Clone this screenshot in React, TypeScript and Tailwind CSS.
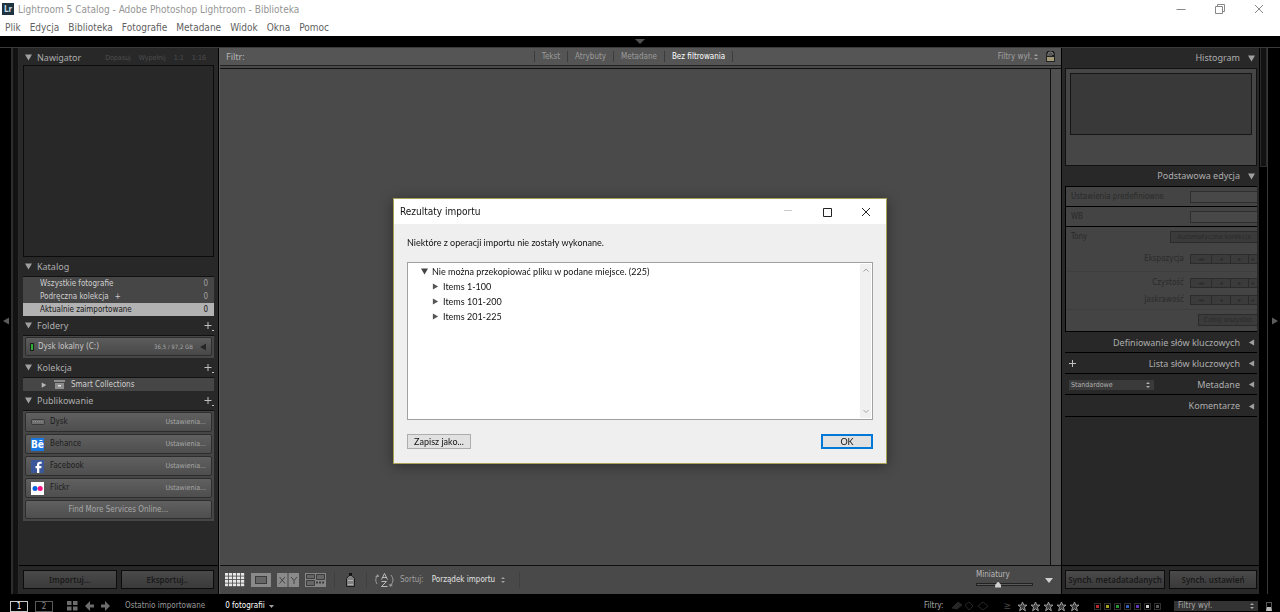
import { clsx } from 'clsx';
import type { ReactNode } from 'react';

const MENU = ['Plik', 'Edycja', 'Biblioteka', 'Fotografie', 'Metadane', 'Widok', 'Okna', 'Pomoc'];
const FILTERS = ['Tekst', 'Atrybuty', 'Metadane', 'Bez filtrowania'];
const CATALOG = [
  { name: 'Wszystkie fotografie', count: 0 },
  { name: 'Podręczna kolekcja', count: 0, plus: true },
  { name: 'Aktualnie zaimportowane', count: 0, active: true },
];
const SERVICES = [
  { name: 'Dysk', icon: <DriveIcon /> },
  { name: 'Behance', icon: <BehanceIcon /> },
  { name: 'Facebook', icon: <FacebookIcon /> },
  { name: 'Flickr', icon: <FlickrIcon /> },
];
const STEPS = [
  { sign: '◂◂', width: 'w-5' },
  { sign: '◂', width: 'w-[19px]' },
  { sign: '▸', width: 'w-[18px]' },
  { sign: '▸', width: 'flex-1' },
];
const ITEMS = ['Items 1-100', 'Items 101-200', 'Items 201-225'];
const LABELS = [
  { name: 'Czerwona', color: 'bg-[#b82a2a]' },
  { name: 'Żółta', color: 'bg-[#a8a41f]' },
  { name: 'Zielona', color: 'bg-[#2b962b]' },
  { name: 'Niebieska', color: 'bg-[#2f5fba]' },
  { name: 'Fioletowa', color: 'bg-[#6238b8]' },
  { name: 'Biała', color: 'bg-[#cdcdcd]' },
  { name: 'Brak', color: 'bg-[#5a5a5a]' },
];

export default function App() {
  return (
    <div className='flex min-h-screen flex-col bg-black font-["DejaVu_Sans_Condensed",sans-serif] text-[8px] leading-3 text-[#a8a8a8]'>
      <WindowHeader />
      <div className="flex h-[11px] flex-none items-center justify-center">
        <svg viewBox="0 0 10 5" className="w-2.5" fill="#505050">
          <path d="M0 0h10L5 5z" />
        </svg>
      </div>
      <main className="flex flex-1 border-t border-[#3a3a3a]">
        <Gutter dir="left" />
        <div className="w-[7px] flex-none border-x border-[#2c2c2c] bg-[#121212]" />
        <LeftPanel />
        <Center />
        <RightPanel />
        <div className="w-2 flex-none border-r border-[#3a3a3a]">
          <div className="h-[119px] border-x border-b border-[#2c2c2c] bg-[#121212]" />
        </div>
        <Gutter dir="right" />
      </main>
      <StatusBar />
      <ImportDialog />
    </div>
  );
}

function WindowHeader() {
  return (
    <header className="flex-none bg-white text-[10px]">
      <div className="flex h-[18px] items-center pl-0.5 pr-4">
        <svg viewBox="0 0 12 12" className="size-3 flex-none">
          <rect width="12" height="12" fill="#1d3340" />
          <text x="2" y="9" fontSize="8" fontWeight="700" fill="#c3d8e2">
            Lr
          </text>
        </svg>
        <h1 className="ml-1 flex-1 pt-0.5 text-[#959595]">Lightroom 5 Catalog - Adobe Photoshop Lightroom - Biblioteka</h1>
        <div className="flex gap-[29px] text-[#888]">
          <WindowButton label="Minimalizuj" d="M0.5 5.5h9" />
          <WindowButton label="Przywróć" d="M0.5 2.5h7v7h-7zM2.5 2.5v-2h7v7h-2" />
          <WindowButton label="Zamknij" d="M1 1l8 8M9 1l-8 8" />
        </div>
      </div>
      <nav className="flex h-[18px] items-center gap-[9px] pl-[5px] pt-0.5 text-[#5f5f5f]">
        {MENU.map((item) => (
          <button key={item} type="button">
            {item}
          </button>
        ))}
      </nav>
    </header>
  );
}

function WindowButton({ label, d }: { label: string; d: string }) {
  return (
    <button type="button" aria-label={label}>
      <svg viewBox="0 0 10 10" className="size-2.5" fill="none" stroke="currentColor">
        <path d={d} />
      </svg>
    </button>
  );
}

function Triangle({ dir, className }: { dir: 'down' | 'left' | 'right'; className?: string }) {
  const d = {
    down: 'M0 .5h8l-4 7z',
    left: 'M7 0.500v7L1 4z',
    right: 'M1 0.500v7L7 4z',
  }[dir];
  return (
    <svg viewBox="0 0 8 8" className={clsx('flex-none', className)} fill="currentColor">
      <path d={d} />
    </svg>
  );
}

function Gutter({ dir }: { dir: 'left' | 'right' }) {
  return (
    <button
      type="button"
      aria-label={dir === 'left' ? 'Ukryj lewy panel' : 'Ukryj prawy panel'}
      className={clsx(
        'flex w-3 flex-none items-center',
        dir === 'left' ? 'justify-center border-r border-[#2c2c2c]' : 'justify-end pr-px',
      )}
    >
      <Triangle dir={dir} className="w-2 text-[#5c5c5c]" />
    </button>
  );
}

function PanelTitle({ title, add, children }: { title: string; add?: boolean; children?: ReactNode }) {
  return (
    <div className="flex h-[19px] items-center pl-0.5">
      <Triangle dir="down" className="w-[7px] text-[#a0a0a0]" />
      <h2 className='ml-[5px] flex-1 font-["Noto_Sans",sans-serif] text-[9px] text-[#adadad]'>{title}</h2>
      {children}
      {add && (
        <button type="button" aria-label={`${title}: dodaj`}>
          <svg viewBox="0 0 10 10" className="size-2.5" fill="none" stroke="#c0c0c0">
            <path d="M0.5 4.5h7M4 1v7M8 9.5h2" />
          </svg>
        </button>
      )}
    </div>
  );
}

function LeftPanel() {
  return (
    <aside className="flex w-[200px] flex-none flex-col border-r border-black bg-[#282828] px-1">
      <div className="h-[17px]">
        <PanelTitle title="Nawigator">
          <div className="flex gap-2 pr-2 text-[7px] text-[#4e4e4e]">
            <span>Dopasuj</span>
            <span>Wypełnij</span>
            <span>1:1</span>
            <span>1:16</span>
          </div>
        </PanelTitle>
      </div>
      <div className="h-48 border border-[#0c0c0c]" />

      <PanelTitle title="Katalog" />
      <ul className="border-t border-[#111] bg-[#464646]">
        {CATALOG.map((row) => (
          <li
            key={row.name}
            className={clsx(
              'flex h-[13px] items-center justify-between pl-[17px] pr-1.5',
              row.active ? 'bg-[#b2b2b2] text-[#161616]' : 'text-[#d0d0d0]',
            )}
          >
            <span>
              {row.name}
              {row.plus && <span className="ml-1.5">+</span>}
            </span>
            <span className={clsx(!row.active && 'text-[#a0a0a0]')}>{row.count}</span>
          </li>
        ))}
      </ul>

      <PanelTitle title="Foldery" add />
      <div className="border-t border-[#111] bg-[#464646] px-0.5 pb-0.5 pt-px">
        <div className="flex h-[19px] items-center rounded-xs border border-[#2d2d2d] bg-linear-to-b from-[#5c5c5c] to-[#484848] px-1">
          <span className="h-2 w-1 border border-[#1d1d1d] bg-[#2fae3a]" />
          <span className="ml-1 flex-1 text-[#c8c8c8]">Dysk lokalny (C:)</span>
          <span className="mr-1.5 text-[6px]">36,5 / 97,2 GB</span>
          <Triangle dir="left" className="w-2 text-[#262626]" />
        </div>
      </div>

      <PanelTitle title="Kolekcja" add />
      <div className="flex h-3.5 items-center border-t border-[#111] bg-[#464646] pl-[18px] text-[#d0d0d0]">
        <Triangle dir="right" className="w-1.5 text-[#b8b8b8]" />
        <svg viewBox="0 0 11 9" className="ml-[7px] w-[11px]">
          <path d="M0 0h11v2H0z" fill="#8c8c8c" />
          <path d="M1 3h9v6H1z" fill="#8c8c8c" />
          <path d="M4 5h3v1.500H4z" fill="#e0e0e0" />
        </svg>
        <span className="ml-1.5">Smart Collections</span>
      </div>

      <PanelTitle title="Publikowanie" add />
      <div className="flex flex-col gap-0.5 border-t border-[#111] bg-[#464646] px-0.5 pb-0.5 pt-px">
        {SERVICES.map((service) => (
          <div
            key={service.name}
            className="flex h-5 items-center rounded-xs border border-[#2d2d2d] bg-linear-to-b from-[#606060] to-[#4e4e4e] pl-1 pr-[5px]"
          >
            <span className="flex w-[15px] justify-center">{service.icon}</span>
            <span className="ml-[5px] flex-1 text-[#1d1d1d]">{service.name}</span>
            <button type="button" className="text-[7px] text-[#a8a8a8]">
              Ustawienia...
            </button>
          </div>
        ))}
        <button
          type="button"
          className="h-[19px] rounded-xs border border-[#2d2d2d] bg-linear-to-b from-[#606060] to-[#4e4e4e]"
        >
          Find More Services Online...
        </button>
      </div>

      <div className="flex-1" />
      <div className="-mx-1 flex gap-1 border-t border-black px-1 pb-[5px] pt-1">
        <PanelButton className="flex-1" label="Importuj..." />
        <PanelButton className="flex-1" label="Eksportuj.." />
      </div>
    </aside>
  );
}

function PanelButton({ label, className }: { label: string; className: string }) {
  return (
    <button
      type="button"
      disabled
      className={clsx(
        'h-[19px] whitespace-nowrap border border-[#0c0c0c] bg-linear-to-b from-[#4a4a4a] to-[#3a3a3a] font-["Noto_Sans",sans-serif] font-semibold text-[#1a1a1a]',
        className,
      )}
    >
      {label}
    </button>
  );
}

function DriveIcon() {
  return (
    <svg viewBox="0 0 14 6" className="w-3.5">
      <rect x="0.500" y="0.500" width="13" height="5" rx="1" fill="#6f6f6f" stroke="#3a3a3a" />
      <path d="M2 2.500h10" stroke="#929292" strokeDasharray="1 1" />
    </svg>
  );
}

function BehanceIcon() {
  return (
    <svg viewBox="0 0 13 13" className="size-[13px]">
      <rect width="13" height="13" fill="#1b78e0" />
      <text x="0" y="10" fontSize="10" fontWeight="700" fill="#fff">
        Bē
      </text>
    </svg>
  );
}

function FacebookIcon() {
  return (
    <svg viewBox="0 0 13 13" className="size-[13px]">
      <rect width="13" height="13" fill="#3a579a" />
      <path d="M8.300 13V8.200h2L10.600 6H8.300V4.800c0-.7.300-1 1-1h1.400V1.700H9C7 1.700 6 2.800 6 4.600V6H4.500v2.200H6V13z" fill="#fff" />
    </svg>
  );
}

function FlickrIcon() {
  return (
    <svg viewBox="0 0 13 13" className="size-[13px]">
      <rect width="13" height="13" fill="#fff" />
      <circle cx="4" cy="6.500" r="2.500" fill="#0a63dc" />
      <circle cx="9.200" cy="6.500" r="2.500" fill="#ff0f84" />
    </svg>
  );
}

function UpDown() {
  return (
    <svg viewBox="0 0 4 6" className="pointer-events-none w-1 flex-none" fill="currentColor">
      <path d="M0 2L2 0l2 2zM0 4h4L2 6z" />
    </svg>
  );
}

function Center() {
  return (
    <section className="flex min-w-0 flex-1 flex-col border-l border-[#5a5a5a] bg-[#4a4a4a]">
      <div className="flex h-[18px] items-center border-b border-[#222] bg-[#555] pl-1.5 pr-1.5">
        <span className='flex-1 font-["Noto_Sans",sans-serif] text-[9px] text-[#b4b4b4]'>Filtr:</span>
        <div className="mr-3.5 flex divide-x divide-[#3c3c3c] border-x border-[#3c3c3c]">
          {FILTERS.map((filter) => (
            <button
              key={filter}
              type="button"
              className={clsx(
                'px-[7px] leading-[11px]',
                filter === 'Bez filtrowania' ? 'text-white' : 'text-[#9c9c9c]',
              )}
            >
              {filter}
            </button>
          ))}
        </div>
        <div className="flex flex-1 items-center justify-end gap-1 text-[#a0a0a0]">
          <button type="button" className="flex items-center gap-0.5">
            Filtry wył. <UpDown />
          </button>
          <button type="button" aria-label="Zablokuj filtry">
            <svg viewBox="0 0 9 11" className="ml-1 w-[9px]">
              <path d="M1.500 5V3a3 2.500 0 0 1 6 0v2" fill="none" stroke="#161616" strokeWidth="2.500" />
              <path d="M2 5V3a2.500 2 0 0 1 5 0v1" fill="none" stroke="#9a9a9a" />
              <rect x="0.500" y="5.500" width="8" height="5" fill="#a39a78" stroke="#222" />
            </svg>
          </button>
        </div>
      </div>
      <div className="mt-0.5 flex flex-1 border-t border-[#111]">
        <div className="flex-1" />
        <div className="w-[11px] border-l border-[#111] bg-[#505050]" />
      </div>
      <Toolbar />
    </section>
  );
}

function ViewIcon({ label, children, width }: { label: string; children: ReactNode; width: number }) {
  return (
    <button type="button" aria-label={label}>
      <svg viewBox={`0 0 ${width} 14`} width={width} height={14}>
        {children}
      </svg>
    </button>
  );
}

function Divider() {
  return <div className="h-4 w-px flex-none bg-[#3f3f3f]" />;
}

function Toolbar() {
  return (
    <div className="flex h-[29px] flex-none items-center border-t border-[#111] bg-[#494949] pl-[5px] pr-2">
      <div className="mr-2 flex flex-none items-center gap-1.5">
        <ViewIcon label="Siatka" width={20}>
          {[0, 1, 2, 3].map((r) =>
            [0, 1, 2, 3, 4].map((c) => (
              <rect key={`${r}${c}`} x={c * 4} y={r * 3.5} width="3.200" height="2.700" fill="#e6e6e6" />
            )),
          )}
        </ViewIcon>
        <ViewIcon label="Lupa" width={20}>
          <rect width="20" height="14" fill="#8a8a8a" />
          <rect x="4.500" y="3.500" width="11" height="7" fill="#666" stroke="#3c3c3c" />
        </ViewIcon>
        <ViewIcon label="Porównanie" width={22}>
          <path d="M0 0h10.500v14H0zM11.500 0H22v14H11.500z" fill="#8a8a8a" />
          <path d="M2.500 4l5.500 6.500M8 4l-5.500 6.500M14 4l3 3.500L20 4M17 7.500v3.500" fill="none" stroke="#444" />
        </ViewIcon>
        <ViewIcon label="Przegląd" width={21}>
          <rect width="21" height="14" fill="#858585" />
          <path d="M1.500 1.500h8v4h-8zM1.500 7.500h8v5h-8zM11.500 1.500h8v5h-8z" fill="#666" stroke="#3c3c3c" />
          <path d="M11 9.500h9" stroke="#3c3c3c" strokeWidth="2" strokeDasharray="2 1" />
        </ViewIcon>
      </div>
      <Divider />
      <div className="mx-2.5 flex items-center">
        <ViewIcon label="Malarz" width={11}>
          <path d="M4 0h3v2H4z" fill="#111" />
          <path d="M1.500 13.500v-8L4 2.500h3l2.500 3v8z" fill="#808080" stroke="#1c1c1c" />
          <path d="M3 7.500h5M3 11.500h5" stroke="#b0b0b0" />
        </ViewIcon>
      </div>
      <Divider />
      <div className="ml-[7px] mr-3.5 flex items-center text-[#a0a0a0]">
        <ViewIcon label="Kierunek sortowania" width={21}>
          <path d="M4 2Q0 6 3 11M17 2q4 5 0 10" fill="none" stroke="#9a9a9a" />
          <path d="M1 4l3-3 1 3zM15 11l1 3 3-2z" fill="#9a9a9a" />
          <path d="M7.500 6.500l3-6 3 6M8.500 4.500h4M7.500 8.500h5l-5 5h6" fill="none" stroke="#bababa" />
        </ViewIcon>
        <label htmlFor="sort" className="ml-[5px]">
          Sortuj:
        </label>
        <select id="sort" className="ml-2 w-[69px] appearance-none text-[#e2e2e2]">
          <option>Porządek importu</option>
        </select>
        <UpDown />
      </div>
      <Divider />
      <div className="flex-1" />
      <label className="mr-3 flex flex-col pb-1 text-[#b8b8b8]">
        Miniatury
        <input
          type="range"
          defaultValue={37}
          className="h-1.5 w-[57px] appearance-none bg-transparent [&::-webkit-slider-runnable-track]:h-[3px] [&::-webkit-slider-runnable-track]:border [&::-webkit-slider-runnable-track]:border-[#222] [&::-webkit-slider-runnable-track]:bg-[#5a5a5a] [&::-webkit-slider-thumb]:-mt-0.5 [&::-webkit-slider-thumb]:size-1.5 [&::-webkit-slider-thumb]:appearance-none [&::-webkit-slider-thumb]:bg-[#d0d0d0] [&::-webkit-slider-thumb]:[clip-path:polygon(50%_0,100%_60%,100%_100%,0_100%,0_60%)]"
        />
      </label>
      <button type="button" aria-label="Opcje paska narzędzi">
        <svg viewBox="0 0 8 5" className="w-2" fill="#d0d0d0">
          <path d="M0 0h8L4 5z" />
        </svg>
      </button>
    </div>
  );
}

function RightTitle({ title, open, children }: { title: string; open?: boolean; children?: ReactNode }) {
  return (
    <div className="flex h-5 items-center pl-1 pr-0.5">
      {children}
      <h2 className='ml-auto mr-2 font-["Noto_Sans",sans-serif] text-[9px] text-[#adadad]'>{title}</h2>
      <Triangle dir={open ? 'down' : 'left'} className="w-[7px] text-[#a0a0a0]" />
    </div>
  );
}

function StepRow({ label }: { label: string }) {
  return (
    <div className="flex h-[17px] flex-1 items-center justify-end">
      <span>{label}</span>
      <div className="ml-1.5 flex w-[67px] flex-none border border-r-0 border-[#2b2b2b] bg-[#3b3b3b]">
        {STEPS.map((step, i) => (
          <button
            key={i}
            type="button"
            disabled
            className={clsx('h-2 border-[#2b2b2b] text-[6px] leading-2', i > 0 && 'border-l', step.width)}
          >
            {step.sign}
          </button>
        ))}
      </div>
    </div>
  );
}

function QuickDevelop() {
  return (
    <div className="h-[146px] overflow-hidden border border-r-0 border-black bg-[#444] text-[#2a2a2a]">
      <label className="flex h-[19px] items-center justify-between pl-[5px]">
        Ustawienia predefiniowne
        <select disabled className="h-3 w-[67px] appearance-none border border-r-0 border-[#2e2e2e] bg-[#484848]" />
      </label>
      <label className="flex h-[21px] items-center justify-between border-y border-black pl-[5px]">
        WB
        <select disabled className="h-3 w-[67px] appearance-none border border-r-0 border-[#2e2e2e] bg-[#484848]" />
      </label>
      <div className="flex h-5 items-center justify-between pl-[5px]">
        Tony
        <button
          type="button"
          disabled
          className="h-3 w-[87px] whitespace-nowrap border border-r-0 border-[#2b2b2b] bg-[#3b3b3b] text-[7px] leading-2"
        >
          Automatyczna korekcja
        </button>
      </div>
      <div className="flex h-[25px] items-center border-b border-[#3e3e3e]">
        <StepRow label="Ekspozycja" />
      </div>
      <div className="flex h-[38px] flex-col border-b border-[#3e3e3e] pt-0.5">
        <StepRow label="Czystość" />
        <StepRow label="Jaskrawość" />
      </div>
      <div className="flex h-5 items-center justify-end">
        <button
          type="button"
          disabled
          className="h-3 w-[59px] whitespace-nowrap border border-r-0 border-[#2b2b2b] bg-[#3b3b3b] text-[7px] leading-2"
        >
          Cofnij wszystko
        </button>
      </div>
    </div>
  );
}

function RightPanel() {
  return (
    <aside className="flex w-[199px] flex-none flex-col border-x border-black bg-[#282828] pl-[3px] pr-0.5">
      <RightTitle title="Histogram" open />
      <div className="h-[98px] border border-[#111] bg-[#464646] p-1">
        <div className="h-[62px] border border-[#161616] bg-[#393939]" />
      </div>
      <RightTitle title="Podstawowa edycja" open />
      <QuickDevelop />
      <div className="flex flex-col gap-px divide-y divide-black border-b border-black pt-px">
        <RightTitle title="Definiowanie słów kluczowych" />
        <RightTitle title="Lista słów kluczowych">
          <button type="button" aria-label="Dodaj słowo kluczowe">
            <svg viewBox="0 0 7 7" className="w-[7px]" stroke="#c0c0c0">
              <path d="M0 3.500h7M3.500 0v7" />
            </svg>
          </button>
        </RightTitle>
        <RightTitle title="Metadane">
          <div className="flex items-center bg-[#3a3a3a] pr-1 text-[#b0b0b0]">
            <select aria-label="Zestaw metadanych" className="h-2.5 w-[77px] appearance-none pl-0.5 text-[7px] leading-2">
              <option>Standardowe</option>
            </select>
            <UpDown />
          </div>
        </RightTitle>
        <RightTitle title="Komentarze" />
      </div>
      <div className="flex-1" />
      <div className="-ml-[3px] -mr-0.5 flex gap-1 border-t border-black pb-[5px] pl-[3px] pr-0.5 pt-1">
        <PanelButton className="flex-8" label="Synch. metadatadanych" />
        <PanelButton className="flex-7" label="Synch. ustawień" />
      </div>
    </aside>
  );
}

function Star() {
  return (
    <svg viewBox="0 0 11 11" className="w-[11px]" fill="#3c3c3c" stroke="#9a9a9a">
      <path d="M5.500 1l1.200 3.100h3.300L7.400 6.200l1 3.600-2.900-2-2.900 2 1-3.600L1 4.100h3.300z" />
    </svg>
  );
}

function StatusBar() {
  return (
    <footer className="flex h-[18px] flex-none items-center pl-2.5 pr-2 pt-1.5">
      <button type="button" className="h-[11px] w-[18px] border border-[#c8c8c8] leading-[9px] text-white">
        1
      </button>
      <button type="button" className="ml-[7px] h-[11px] w-[18px] border border-[#5a5a5a] leading-[9px] text-[#8a8a8a]">
        2
      </button>
      <svg viewBox="0 0 44 10" className="ml-3.5 w-11 flex-none" fill="#6c6c6c">
        <path d="M0 0h4.500v4H0zM6 0h4.500v4H6zM0 5.500h4.500v4H0zM6 5.500h4.500v4H6z" />
        <path d="M23 0v3.500h4v3h-4V10l-5-5zM38 0v3.500h-4v3h4V10l5-5z" />
      </svg>
      <span className="ml-3.5 text-[#9a9a9a]">Ostatnio importowane</span>
      <button type="button" className="ml-5 flex items-center gap-1 text-white">
        0 fotografii
        <svg viewBox="0 0 5 3" className="w-[5px]" fill="#a0a0a0">
          <path d="M0 0h5L2.500 3z" />
        </svg>
      </button>
      <div className="flex-1" />
      <span>Filtry:</span>
      <svg viewBox="0 0 38 12" className="ml-2 w-[38px] flex-none" fill="none" stroke="#262626">
        <path d="M1 8l6-6 4 3-5 4z" fill="#262626" />
        <path d="M14 5l4-3 4 4-4 4zM27 6l5-4 5 4-5 4z" />
      </svg>
      <span className="ml-3.5 text-[10px] text-[#4a4a4a]">≥</span>
      <div className="ml-1.5 flex gap-0.5">
        {[1, 2, 3, 4, 5].map((n) => (
          <button key={n} type="button" aria-label={`Ocena ${n}`}>
            <Star />
          </button>
        ))}
      </div>
      <div className="ml-3.5 flex gap-[3px]">
        {LABELS.map((label) => (
          <button key={label.name} type="button" aria-label={label.name} className="border border-[#303030] p-px">
            <span className={clsx('block size-[3px]', label.color)} />
          </button>
        ))}
      </div>
      <div className="ml-[13px] flex items-center bg-[#333] pr-1">
        <select aria-label="Filtry" className="h-2.5 w-[76px] appearance-none pl-1 leading-2.5">
          <option>Filtry wył.</option>
        </select>
        <UpDown />
      </div>
      <button type="button" aria-label="Włącz filtry" className="ml-2 h-[9px] w-1.5 border border-b-4 border-[#555] border-b-[#bbb]" />
    </footer>
  );
}

function ImportDialog() {
  return (
    <div className='fixed inset-0 flex items-start justify-center pt-[198px] font-["Lato",sans-serif] text-[9px] text-[#111]'>
      <div
        role="dialog"
        aria-labelledby="dialog-title"
        className="w-[494px] border border-[#a8a052] bg-[#efefef] shadow-[0_2px_12px_rgba(0,0,0,0.4)]"
      >
        <div className="flex h-[25px] items-center bg-white pl-1.5 pr-[15px]">
          <h2 id="dialog-title" className='flex-1 pt-px font-["DejaVu_Sans_Condensed",sans-serif] text-[10px]'>
            Rezultaty importu
          </h2>
          <div className="flex gap-[29px] text-[#222]">
            <span className="text-[#ccc]">
              <WindowButton label="Minimalizuj okno" d="M1 5.500h8" />
            </span>
            <WindowButton label="Maksymalizuj okno" d="M1.500 1.500h8v8h-8z" />
            <WindowButton label="Zamknij okno" d="M1 1l8 8M9 1l-8 8" />
          </div>
        </div>
        <div className="px-[13px] pb-3.5 pt-[13px]">
          <p className="pb-[13px]">Niektóre z operacji importu nie zostały wykonane.</p>
          <div className="flex h-[158px] border border-[#a0a0a0] bg-white p-px">
            <ul className="flex-1 pl-3">
              <li>
                <button type="button" className="flex h-[15px] items-center gap-1">
                  <Triangle dir="down" className="w-[7px] text-[#444]" />
                  Nie można przekopiować pliku w podane miejsce. (225)
                </button>
                <ul className="pl-[11px]">
                  {ITEMS.map((item) => (
                    <li key={item}>
                      <button type="button" className="flex h-[15px] items-center gap-1">
                        <Triangle dir="right" className="w-[7px] text-[#555]" />
                        {item}
                      </button>
                    </li>
                  ))}
                </ul>
              </li>
            </ul>
            <div className="flex w-[11px] flex-col items-center justify-between bg-[#f0f0f0] py-1">
              <ScrollArrow d="M0.500 3.500l2.500-2.500 2.500 2.500" />
              <ScrollArrow d="M0.500 1l2.500 2.500L5.500 1" />
            </div>
          </div>
          <div className="flex justify-between pt-3.5">
            <button type="button" className="h-[15px] w-16 border border-[#adadad] bg-[#e1e1e1] leading-3">
              Zapisz jako...
            </button>
            <button type="button" className="h-[15px] w-[52px] border-2 border-[#0078d7] bg-[#e1e1e1] leading-2.5">
              OK
            </button>
          </div>
        </div>
      </div>
    </div>
  );
}

function ScrollArrow({ d }: { d: string }) {
  return (
    <svg viewBox="0 0 6 5" className="w-1.5" fill="none" stroke="#a5a5a5">
      <path d={d} />
    </svg>
  );
}
